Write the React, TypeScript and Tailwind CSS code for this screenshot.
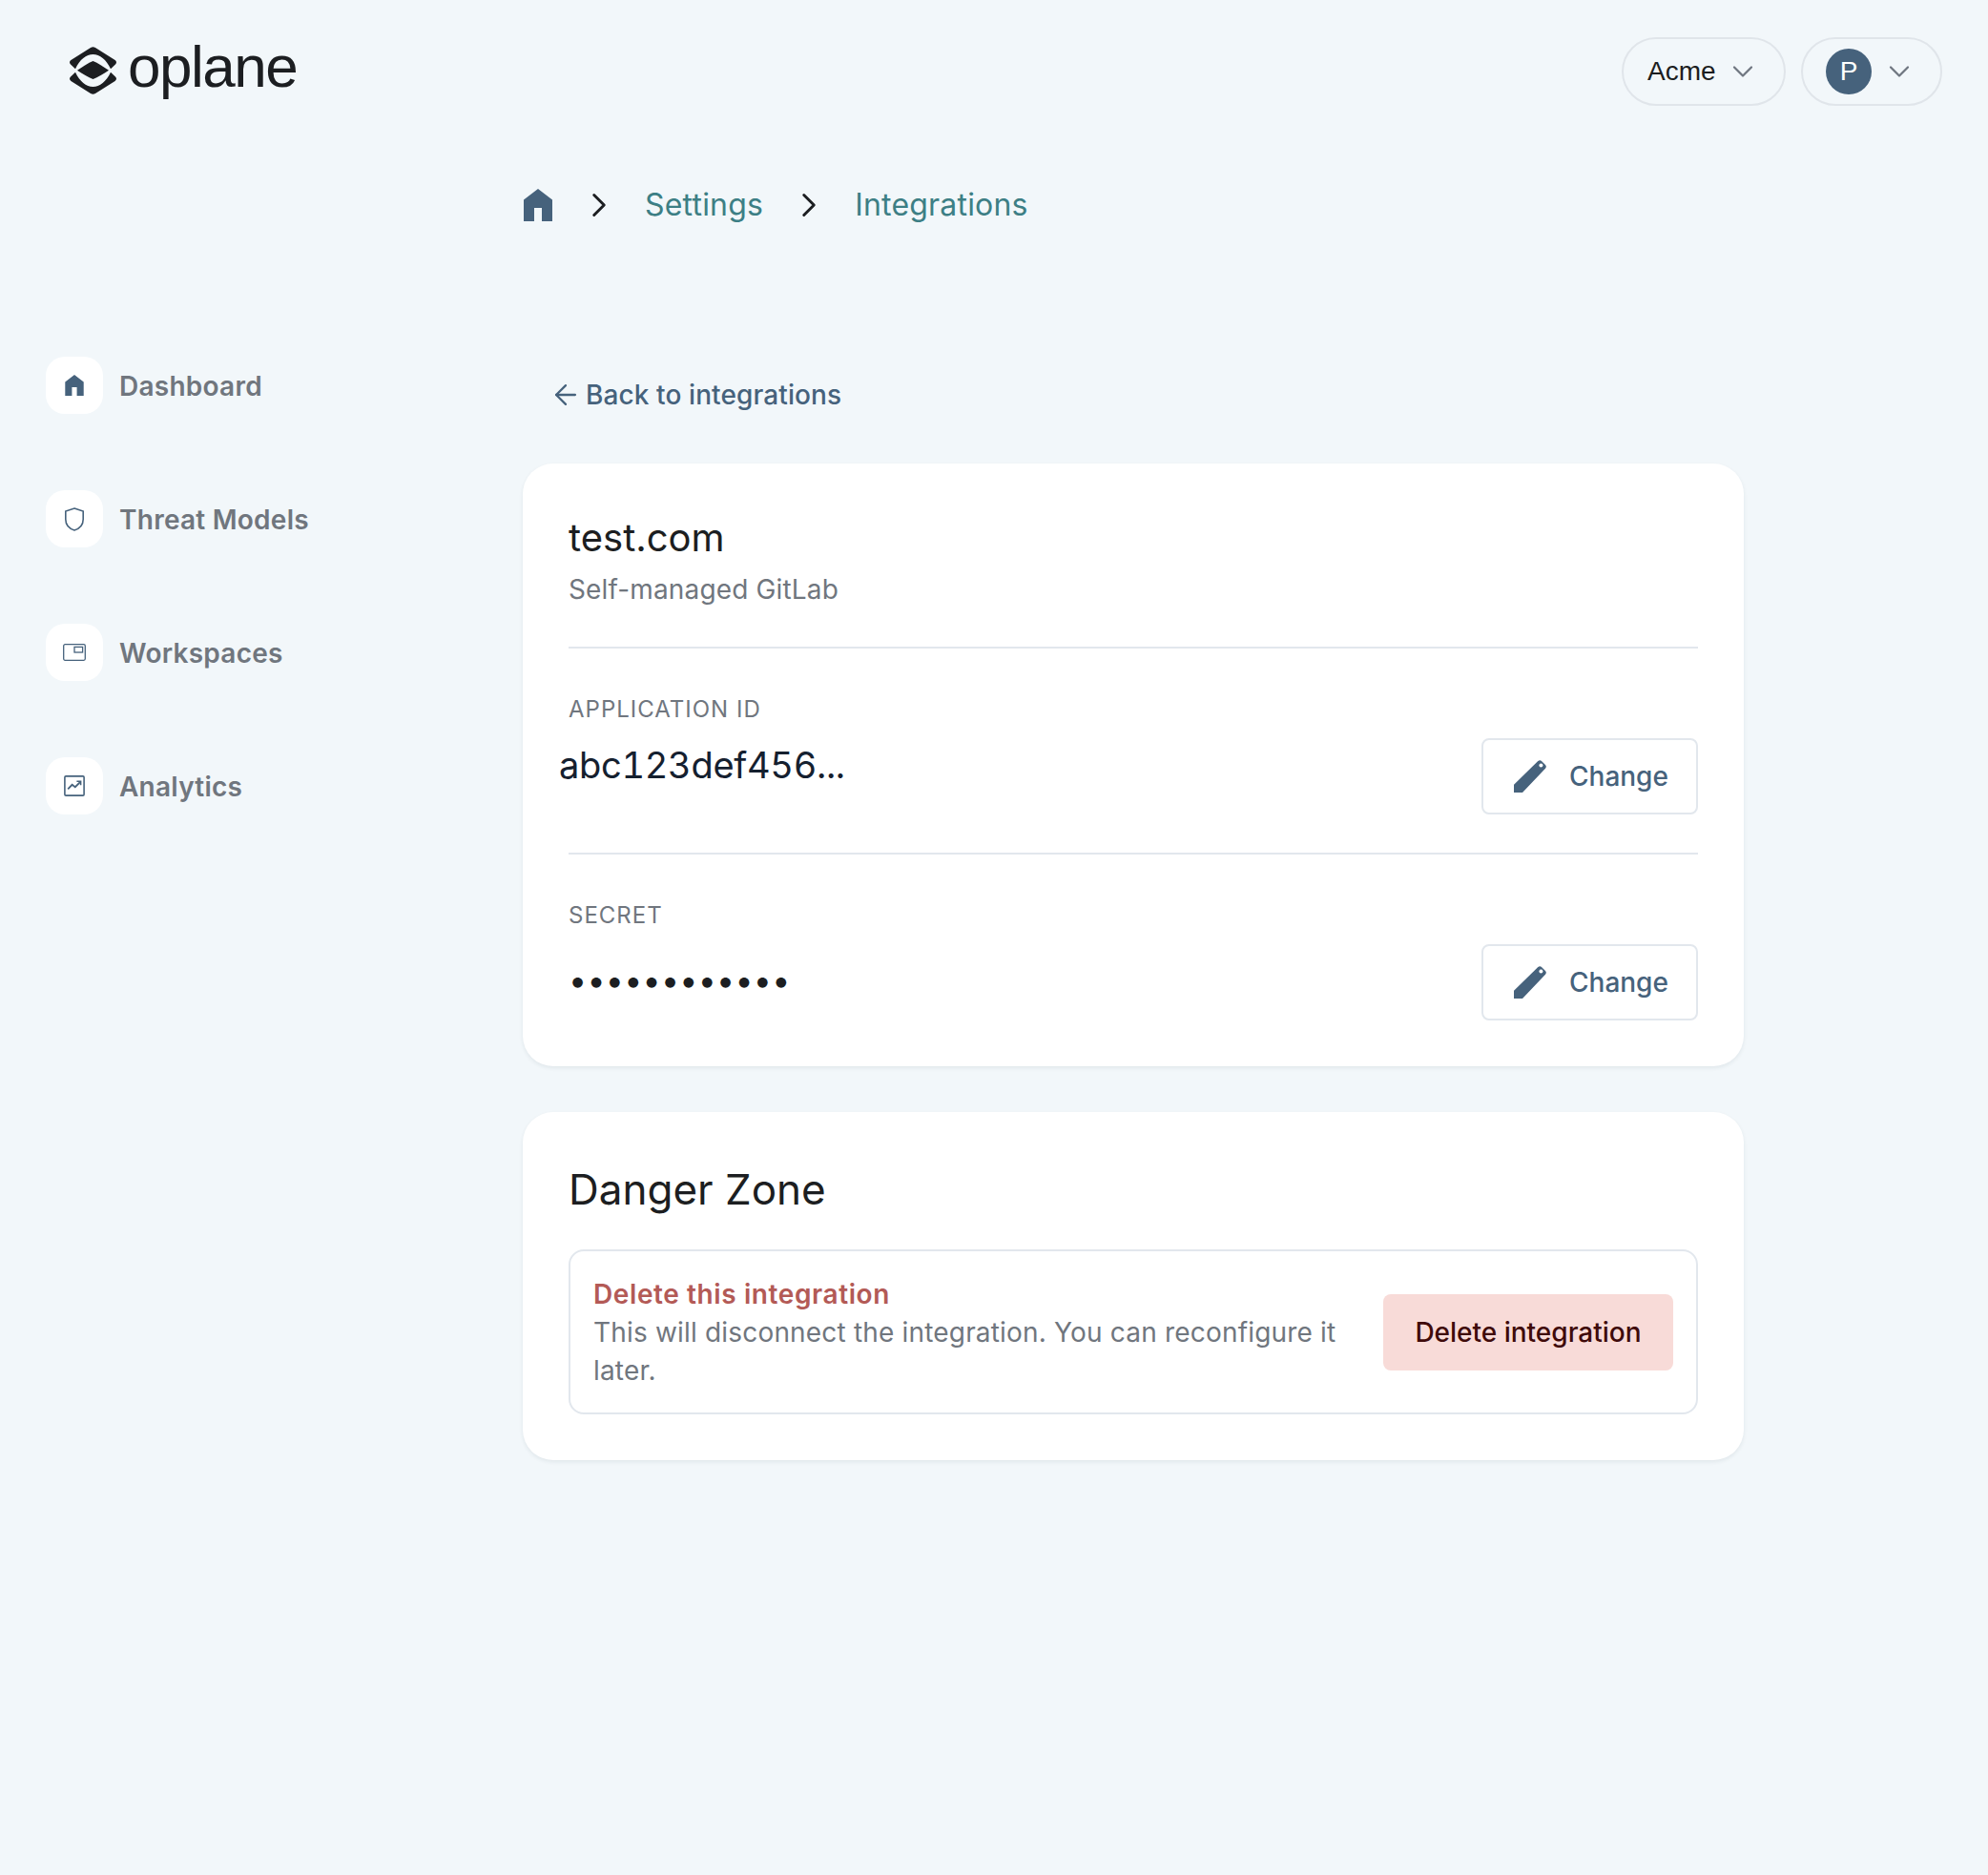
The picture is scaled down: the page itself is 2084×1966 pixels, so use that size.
import { ChevronDown, ChevronRight, ArrowLeft } from "lucide-react";

const navItems = [
  { label: "Dashboard", icon: <HomeIcon className="h-[22px] w-[20px]" /> },
  { label: "Threat Models", icon: <ShieldIcon /> },
  { label: "Workspaces", icon: <WorkspaceIcon /> },
  { label: "Analytics", icon: <ChartIcon /> },
];

function HomeIcon({ className }: { className: string }) {
  return (
    <svg viewBox="0 0 30 34" className={className} fill="#46627c">
      <path fillRule="evenodd" d="M15 0 30 11.5V34H19V20H11V34H0V11.5Z" />
    </svg>
  );
}

function ShieldIcon() {
  return (
    <svg viewBox="0 0 20 25" className="h-[25px] w-[20px]" fill="none" stroke="#46627c" strokeWidth="1.6">
      <path d="M10 1 19.2 4V12.5C19.2 18 15.5 22.2 10 24 4.5 22.2 .8 18 .8 12.5V4Z" />
    </svg>
  );
}

function WorkspaceIcon() {
  return (
    <svg viewBox="0 0 24 18" className="h-[18px] w-[24px]" fill="none" stroke="#46627c" strokeWidth="1.3">
      <rect x="0.7" y="0.7" width="22.6" height="16.6" rx="1.5" />
      <rect x="12" y="3.4" width="8.6" height="5.6" />
    </svg>
  );
}

function ChartIcon() {
  return (
    <svg viewBox="0 0 22 22" className="h-[22px] w-[22px]" fill="none" stroke="#46627c">
      <rect x="0.9" y="0.9" width="20.2" height="20.2" rx="1.2" strokeWidth="1.6" />
      <path d="M4.2 14.4 8.6 9.8 11.8 12.2 17.2 6.8" strokeWidth="1.8" />
      <path d="M13.4 6.2H17.6V10.2" strokeWidth="1.6" />
    </svg>
  );
}

function PencilIcon() {
  return (
    <svg viewBox="0 0 34 34" className="h-[34px] w-[34px]">
      <path fill="#46627c" d="M0 25.7 25 1.3C26.4 0 28 0 29 1L33 5C34.2 6.2 34 7.6 33 8.8L9 34H0Z" />
      <circle cx="28.4" cy="5.6" r="2" fill="#fff" />
    </svg>
  );
}

function LogoMark() {
  return (
    <svg viewBox="0 0 49 50" className="h-[50px] w-[49px]" fill="#1c1e21">
      <path d="M24.5 15C29.5 17 35.5 21 41 24.7 35.5 28.4 29.5 32 24.5 34 19.5 32 13.5 28.4 8 24.7 13.5 21 19.5 17 24.5 15Z" />
      <path d="M22 1 1.4 14C-.4 15.4-.4 17 1 18.4L6 23.2C10.6 13.4 17.4 8 24.5 8S38.4 13.4 43 23.2L48 18.4C49.4 17 49.4 15.4 47.6 14L27 1C25.4 0 23.6 0 22 1Z" />
      <path d="M22 49 1.4 36C-.4 34.6-.4 33 1 31.6L6 26.8C10.6 36.6 17.4 42 24.5 42S38.4 36.6 43 26.8L48 31.6C49.4 33 49.4 34.6 47.6 36L27 49C25.4 50 23.6 50 22 49Z" />
    </svg>
  );
}

function ChangeButton() {
  return (
    <button className="flex h-20 w-[227px] shrink-0 items-center gap-[24px] rounded-lg border-2 border-[#e2e7ed] bg-white pl-[32px] text-[28px] font-medium text-[#46627c]">
      <PencilIcon />
      Change
    </button>
  );
}

export default function App() {
  return (
    <div className="min-h-[1966px] bg-[#f2f7fa] font-['Inter',sans-serif] text-[#1c1e21]">
      <header className="flex items-start justify-between pl-[73px] pr-[48px] pt-[39px]">
        <div className="flex items-start gap-[12px] pt-[10px]">
          <LogoMark />
          <span className="font-['Liberation_Sans',sans-serif] text-[62px] leading-[42px] tracking-[-1.5px]">oplane</span>
        </div>
        <div className="flex gap-[16px] font-['Liberation_Sans',sans-serif]">
          <div className="flex h-[72px] w-[172px] items-center gap-[10px] rounded-full border-2 border-[#e0e5ea] pl-[25px] text-[28px]">
            Acme
            <ChevronDown className="h-[36px] w-[36px] text-[#6f7680]" strokeWidth={1.5} />
          </div>
          <div className="flex h-[72px] w-[148px] items-center gap-[11px] rounded-full border-2 border-[#e0e5ea] pl-[24px]">
            <span className="flex h-[48px] w-[48px] items-center justify-center rounded-full bg-[#46627c] text-[28px] text-white">P</span>
            <ChevronDown className="h-[36px] w-[36px] text-[#6f7680]" strokeWidth={1.5} />
          </div>
        </div>
      </header>

      <div className="flex">
        <nav className="flex w-[548px] shrink-0 flex-col gap-[80px] pl-[48px] pt-[263px]">
          {navItems.map((item) => (
            <a key={item.label} className="flex items-center gap-[17px] text-[28px] font-semibold tracking-[0.25px] text-[#70767e]">
              <span className="flex h-[60px] w-[60px] items-center justify-center rounded-[20px] bg-white">{item.icon}</span>
              <span className="pt-[2px]">{item.label}</span>
            </a>
          ))}
        </nav>

        <main className="w-[1280px] shrink-0 pt-[84px]">
          <div className="flex h-[40px] items-center pl-[1px] text-[32px] tracking-[0.2px] text-[#3d7f85]">
            <HomeIcon className="h-[34px] w-[30px]" />
            <ChevronRight className="ml-[28px] h-[42px] w-[42px] text-[#1c1e21]" strokeWidth={1.7} />
            <span className="ml-[27px]">Settings</span>
            <ChevronRight className="ml-[27px] h-[42px] w-[42px] text-[#1c1e21]" strokeWidth={1.7} />
            <span className="ml-[27px]">Integrations</span>
          </div>

          <a className="ml-[28px] mt-[159px] flex h-[40px] items-center gap-[4px] text-[28px] font-medium tracking-[0.1px] text-[#46627c]">
            <ArrowLeft className="h-[34px] w-[34px]" strokeWidth={1.6} />
            Back to integrations
          </a>

          <section className="mt-[52px] rounded-[32px] bg-white p-[48px] shadow-[0_2px_4px_rgba(30,50,70,0.08)]">
            <h1 className="text-[40px] leading-[60px]">test.com</h1>
            <p className="mt-[4px] text-[28px] leading-[40px] tracking-[0.15px] text-[#70767e]">Self-managed GitLab</p>

            <hr className="mt-[40px] border-t-2 border-[#e2e7ed]" />

            <div className="mt-[48px] text-[24px] uppercase leading-[32px] tracking-[1px] text-[#70767e]">Application ID</div>
            <div className="mt-[14px] flex items-start justify-between">
              <span className="-ml-[10px] text-[38px] leading-[56px] tracking-[-0.3px] text-[#15202f] tabular-nums">abc123def456...</span>
              <ChangeButton />
            </div>

            <hr className="mt-[40px] border-t-2 border-[#e2e7ed]" />

            <div className="mt-[48px] text-[24px] uppercase leading-[32px] tracking-[1px] text-[#70767e]">Secret</div>
            <div className="mt-[14px] flex items-center justify-between">
              <span className="mb-[5px] text-[34px] leading-[50px] tracking-[0.25px]">••••••••••••</span>
              <ChangeButton />
            </div>
          </section>

          <section className="mt-[48px] rounded-[32px] bg-white p-[48px] shadow-[0_2px_4px_rgba(30,50,70,0.08)]">
            <h2 className="text-[44px] leading-[66px]">Danger Zone</h2>
            <div className="mt-[30px] flex items-center gap-[48px] rounded-2xl border-2 border-[#e2e7ed] px-[24px] pb-[24px] pt-[25px]">
              <div className="flex-1 text-[28px] leading-[40px] tracking-[0.18px] text-[#70767e]">
                <div className="font-semibold tracking-[0.6px] text-[#b35a56]">Delete this integration</div>
                This will disconnect the integration. You can reconfigure it later.
              </div>
              <button className="h-20 w-[304px] shrink-0 rounded-lg bg-[#f8dbd8] text-[28px] font-medium text-[#3f0a0a]">Delete integration</button>
            </div>
          </section>
        </main>
      </div>
    </div>
  );
}
